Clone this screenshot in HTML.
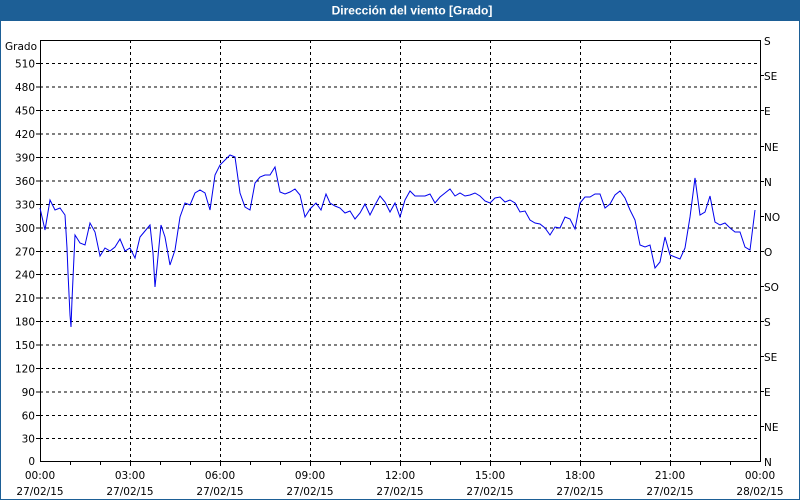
<!DOCTYPE html>
<html><head><meta charset="utf-8"><style>
body{margin:0;width:800px;height:500px;overflow:hidden;background:#fff}
svg{display:block;font-family:"DejaVu Sans","Liberation Sans",sans-serif;font-size:10.5px}
</style></head><body>
<svg width="800" height="500" xmlns="http://www.w3.org/2000/svg">
<rect x="0" y="0" width="800" height="500" fill="#fff"/>
<rect x="0" y="0" width="800" height="21" fill="#1d5f96"/>
<rect x="0" y="0" width="1" height="500" fill="#1d5f96"/>
<rect x="799" y="0" width="1" height="500" fill="#1d5f96"/>
<rect x="0" y="499" width="800" height="1" fill="#1d5f96"/>
<text x="412" y="14.5" fill="#fff" font-weight="bold" text-anchor="middle" font-size="12" font-family="Liberation Sans, sans-serif">Dirección del viento [Grado]</text>
<g stroke="#000" stroke-width="1" stroke-dasharray="3,3" fill="none">
<path d="M40 63.5H760M40 87H760M40 110.5H760M40 134H760M40 157.5H760M40 181H760M40 204.5H760M40 228H760M40 251.5H760M40 274.5H760M40 298H760M40 321.5H760M40 345H760M40 368.5H760M40 392H760M40 415.5H760M40 438.5H760"/>
<path d="M130.5 40V461M220.5 40V461M310.5 40V461M400.5 40V461M490.5 40V461M580.5 40V461M670.5 40V461"/>
</g>
<g stroke="#000" fill="none">
<path d="M40.5 40V461.5H760.5V40M40 40.5H760"/>
<path d="M70.5 461V465M100.5 461V465M130.5 461V466M160.5 461V465M190.5 461V465M220.5 461V466M250.5 461V465M280.5 461V465M310.5 461V466M340.5 461V465M370.5 461V465M400.5 461V466M430.5 461V465M460.5 461V465M490.5 461V466M520.5 461V465M550.5 461V465M580.5 461V466M610.5 461V465M640.5 461V465M670.5 461V466M700.5 461V465M730.5 461V465"/>
<path d="M36 63.5H40M36 87H40M36 110.5H40M36 134H40M36 157.5H40M36 181H40M36 204.5H40M36 228H40M36 251.5H40M36 274.5H40M36 298H40M36 321.5H40M36 345H40M36 368.5H40M36 392H40M36 415.5H40M36 438.5H40"/>
<path d="M760 75.5H764M760 110.5H764M760 146.5H764M760 181.5H764M760 216.5H764M760 251.5H764M760 286.5H764M760 321.5H764M760 356.5H764M760 391.5H764M760 426.5H764"/>
</g>
<polyline fill="none" stroke="#0000ee" stroke-width="1" points="40,208 45,230 50,200 55,210 60,208 65,215 67,248 68,273 70,315 71,327 72,300 75,235 80,243 85,245 90,223 95,232 100,256 105,248 110,251 115,247 120,239 125,251 130,248 135,258 140,237 145,231 150,225 153,253 155,287 157,267 161,225 165,237 170,265 175,250 180,217 185,203 190,205 195,193 200,190 205,193 210,210 215,175 220,165 225,160 230,155 235,157 240,193 245,207 250,210 255,183 260,177 265,175 270,175 275,167 280,192 285,194 290,192 295,189 300,195 305,217 310,209 316,203 321,210 326,194 330,203 335,206 340,208 345,213 350,211 355,219 360,213 365,204 370,215 375,205 380,196 385,202 390,212 395,203 400,217 405,200 410,191 415,196 420,196 425,196 430,194 435,203 440,197 445,193 450,189 455,196 460,193 465,196 470,195 475,193 480,196 485,201 490,203 495,198 500,197 505,202 510,200 515,203 520,212 525,211 530,220 535,223 540,224 545,228 550,235 555,227 560,228 565,217 570,219 575,229 580,203 585,197 590,197 595,194 600,194 605,208 610,204 615,195 620,191 625,198 630,210 635,220 640,245 645,247 650,245 655,268 660,262 665,237 670,255 675,257 680,259 685,248 690,217 695,178 700,215 705,212 710,196 715,222 720,225 725,223 730,228 735,232 740,232 745,247 750,250 755,210"/>
<g fill="#000" text-anchor="end">
<text x="37" y="50">Grado</text>
<text x="35" y="67.5">510</text><text x="35" y="91">480</text><text x="35" y="114.5">450</text><text x="35" y="138">420</text><text x="35" y="161.5">390</text><text x="35" y="185">360</text><text x="35" y="208.5">330</text><text x="35" y="232">300</text><text x="35" y="255.5">270</text><text x="35" y="278.5">240</text><text x="35" y="302">210</text><text x="35" y="325.5">180</text><text x="35" y="349">150</text><text x="35" y="372.5">120</text><text x="35" y="396">90</text><text x="35" y="419.5">60</text><text x="35" y="442.5">30</text><text x="35" y="465">0</text>
</g>
<g fill="#000">
<text x="764" y="45">S</text><text x="764" y="80">SE</text><text x="764" y="115">E</text><text x="764" y="151">NE</text><text x="764" y="186">N</text><text x="764" y="221">NO</text><text x="764" y="256">O</text><text x="764" y="291">SO</text><text x="764" y="326">S</text><text x="764" y="361">SE</text><text x="764" y="396">E</text><text x="764" y="431">NE</text><text x="764" y="466">N</text>
</g>
<g fill="#000" text-anchor="middle">
<text x="40" y="479">00:00</text><text x="40" y="495">27/02/15</text>
<text x="130" y="479">03:00</text><text x="130" y="495">27/02/15</text>
<text x="220" y="479">06:00</text><text x="220" y="495">27/02/15</text>
<text x="310" y="479">09:00</text><text x="310" y="495">27/02/15</text>
<text x="400" y="479">12:00</text><text x="400" y="495">27/02/15</text>
<text x="490" y="479">15:00</text><text x="490" y="495">27/02/15</text>
<text x="580" y="479">18:00</text><text x="580" y="495">27/02/15</text>
<text x="670" y="479">21:00</text><text x="670" y="495">27/02/15</text>
<text x="760" y="479">00:00</text><text x="760" y="495">28/02/15</text>
</g>
</svg>
</body></html>
